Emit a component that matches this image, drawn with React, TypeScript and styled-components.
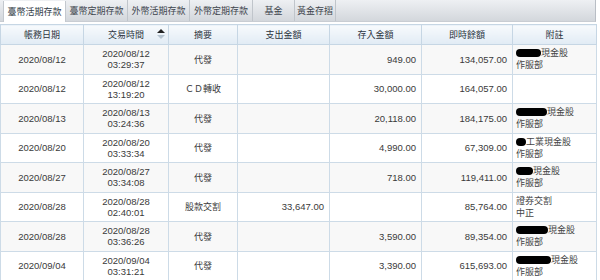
import React from "react";
import styled, { createGlobalStyle } from "styled-components";

const Global = createGlobalStyle`
  html, body { margin: 0; padding: 0; background: #fff; }
  body { font-family: "Liberation Sans", "Noto Sans CJK TC", sans-serif; color: #333; }
`;

const Page = styled.div`
  width: 600px;
  height: 280px;
  overflow: hidden;
`;

const TabBar = styled.div`
  display: flex;
  width: 596px;
  height: 22px;
  box-sizing: border-box;
  padding-left: 3px;
  background: linear-gradient(#eef0f3, #d3d7dc);
  border-right: 1px solid #b9bec5;
  border-bottom: 1px solid #c9cdd3;
`;

const Tab = styled.div<{ $active?: boolean; $w: number }>`
  width: ${(p) => p.$w}px;
  height: 21px;
  box-sizing: border-box;
  display: flex;
  align-items: center;
  justify-content: center;
  white-space: nowrap;
  font-family: "Noto Sans CJK TC", sans-serif;
  font-size: 9px;
  color: ${(p) => (p.$active ? "#2f3a45" : "#3d444c")};
  background: ${(p) => (p.$active ? "#fff" : "transparent")};
  border-right: 1px solid ${(p) => (p.$active ? "#c3c8ce" : "#c0c5cb")};
  border-left: ${(p) => (p.$active ? "1px solid #c3c8ce" : "none")};
  margin-top: ${(p) => (p.$active ? 1 : 0)}px;
`;

const Table = styled.table`
  margin-top: 2px;
  width: 596px;
  border-collapse: collapse;
  table-layout: fixed;
  font-family: "Liberation Sans", sans-serif;
  font-size: 9.5px;
`;

const Th = styled.th`
  height: 19px;
  padding: 0;
  font-weight: normal;
  font-family: "Noto Sans CJK TC", sans-serif;
  font-size: 9px;
  white-space: nowrap;
  color: #2c3440;
  background: linear-gradient(#f7fafd, #e1ebf4);
  border: 1px solid #c6d6e4;
  position: relative;
`;

const Row = styled.tr<{ $alt: boolean }>`
  height: 29.5px;
  background: ${(p) => (p.$alt ? "#f8f8f8" : "#fff")};
`;

const Td = styled.td<{ $align?: string }>`
  padding: 0 ${(p) => (p.$align === "right" ? 5 : p.$align === "left" ? 3 : 0)}px;
  text-align: ${(p) => p.$align || "center"};
  border: 1px solid #cddbe7;
  line-height: 11px;
  color: #3a3a3a;
  white-space: nowrap;
  overflow: hidden;
`;

const Cjk = styled.span`
  font-family: "Noto Sans CJK TC", sans-serif;
  font-size: 9px;
`;

const Note = styled.div`
  font-family: "Noto Sans CJK TC", sans-serif;
  font-size: 9px;
  line-height: 12px;
  color: #444;
  display: flex;
  align-items: center;
`;

const Black = styled.span<{ $w: number }>`
  display: inline-block;
  width: ${(p) => p.$w}px;
  height: 8px;
  background: #000;
  border-radius: 4px;
`;

const Sort = styled.span`
  position: absolute;
  right: 3px;
  top: 4px;
  display: flex;
  flex-direction: column;
  gap: 2px;
`;

const TriUp = styled.span`
  width: 0;
  height: 0;
  border-left: 4px solid transparent;
  border-right: 4px solid transparent;
  border-bottom: 4px solid #222;
`;

const TriDown = styled.span`
  width: 0;
  height: 0;
  border-left: 4px solid transparent;
  border-right: 4px solid transparent;
  border-top: 4px solid #b5c3cf;
`;

const tabs: [string, number][] = [
  ["臺幣活期存款", 63],
  ["臺幣定期存款", 62],
  ["外幣活期存款", 62],
  ["外幣定期存款", 63],
  ["基金", 42],
  ["黃金存摺", 41],
];

const cols = [83, 85, 69, 92, 92, 91, 84];
const heads = ["帳務日期", "交易時間", "摘要", "支出金額", "存入金額", "即時餘額", "附註"];

type R = {
  d: string;
  t: string;
  s: string;
  out: string;
  inn: string;
  bal: string;
  blk?: number;
  n1?: string;
  n2?: string;
};

const rows: R[] = [
  { d: "2020/08/12", t: "03:29:37", s: "代發", out: "", inn: "949.00", bal: "134,057.00", blk: 25, n1: "現金股", n2: "作服部" },
  { d: "2020/08/12", t: "13:19:20", s: "ＣＤ轉收", out: "", inn: "30,000.00", bal: "164,057.00" },
  { d: "2020/08/13", t: "03:24:36", s: "代發", out: "", inn: "20,118.00", bal: "184,175.00", blk: 31, n1: "現金股", n2: "作服部" },
  { d: "2020/08/20", t: "03:33:34", s: "代發", out: "", inn: "4,990.00", bal: "67,309.00", blk: 10, n1: "工業現金股", n2: "作服部" },
  { d: "2020/08/27", t: "03:34:08", s: "代發", out: "", inn: "718.00", bal: "119,411.00", blk: 17, n1: "現金股", n2: "作服部" },
  { d: "2020/08/28", t: "02:40:01", s: "股款交割", out: "33,647.00", inn: "", bal: "85,764.00", n1: "證券交割", n2: "中正" },
  { d: "2020/08/28", t: "03:36:26", s: "代發", out: "", inn: "3,590.00", bal: "89,354.00", blk: 32, n1: "現金股", n2: "作服部" },
  { d: "2020/09/04", t: "03:31:21", s: "代發", out: "", inn: "3,390.00", bal: "615,693.00", blk: 35, n1: "現金股", n2: "作服部" },
];

export default function App() {
  return (
    <Page>
      <Global />
      <TabBar>
        {tabs.map(([t, w], i) => (
          <Tab key={t} $w={w} $active={i === 0}>
            {t}
          </Tab>
        ))}
      </TabBar>
      <Table>
        <colgroup>
          {cols.map((w, i) => (
            <col key={i} style={{ width: w }} />
          ))}
        </colgroup>
        <thead>
          <tr>
            {heads.map((h, i) => (
              <Th key={h}>
                {h}
                {i === 1 && (
                  <Sort>
                    <TriUp />
                    <TriDown />
                  </Sort>
                )}
              </Th>
            ))}
          </tr>
        </thead>
        <tbody>
          {rows.map((r, i) => (
            <Row key={i} $alt={i % 2 === 0}>
              <Td>{r.d}</Td>
              <Td>
                {r.d}
                <br />
                {r.t}
              </Td>
              <Td>
                <Cjk>{r.s}</Cjk>
              </Td>
              <Td $align="right">{r.out}</Td>
              <Td $align="right">{r.inn}</Td>
              <Td $align="right">{r.bal}</Td>
              <Td $align="left">
                {r.n1 && (
                  <>
                    <Note>
                      {r.blk ? <Black $w={r.blk} /> : null}
                      {r.n1}
                    </Note>
                    <Note>{r.n2}</Note>
                  </>
                )}
              </Td>
            </Row>
          ))}
        </tbody>
      </Table>
    </Page>
  );
}
